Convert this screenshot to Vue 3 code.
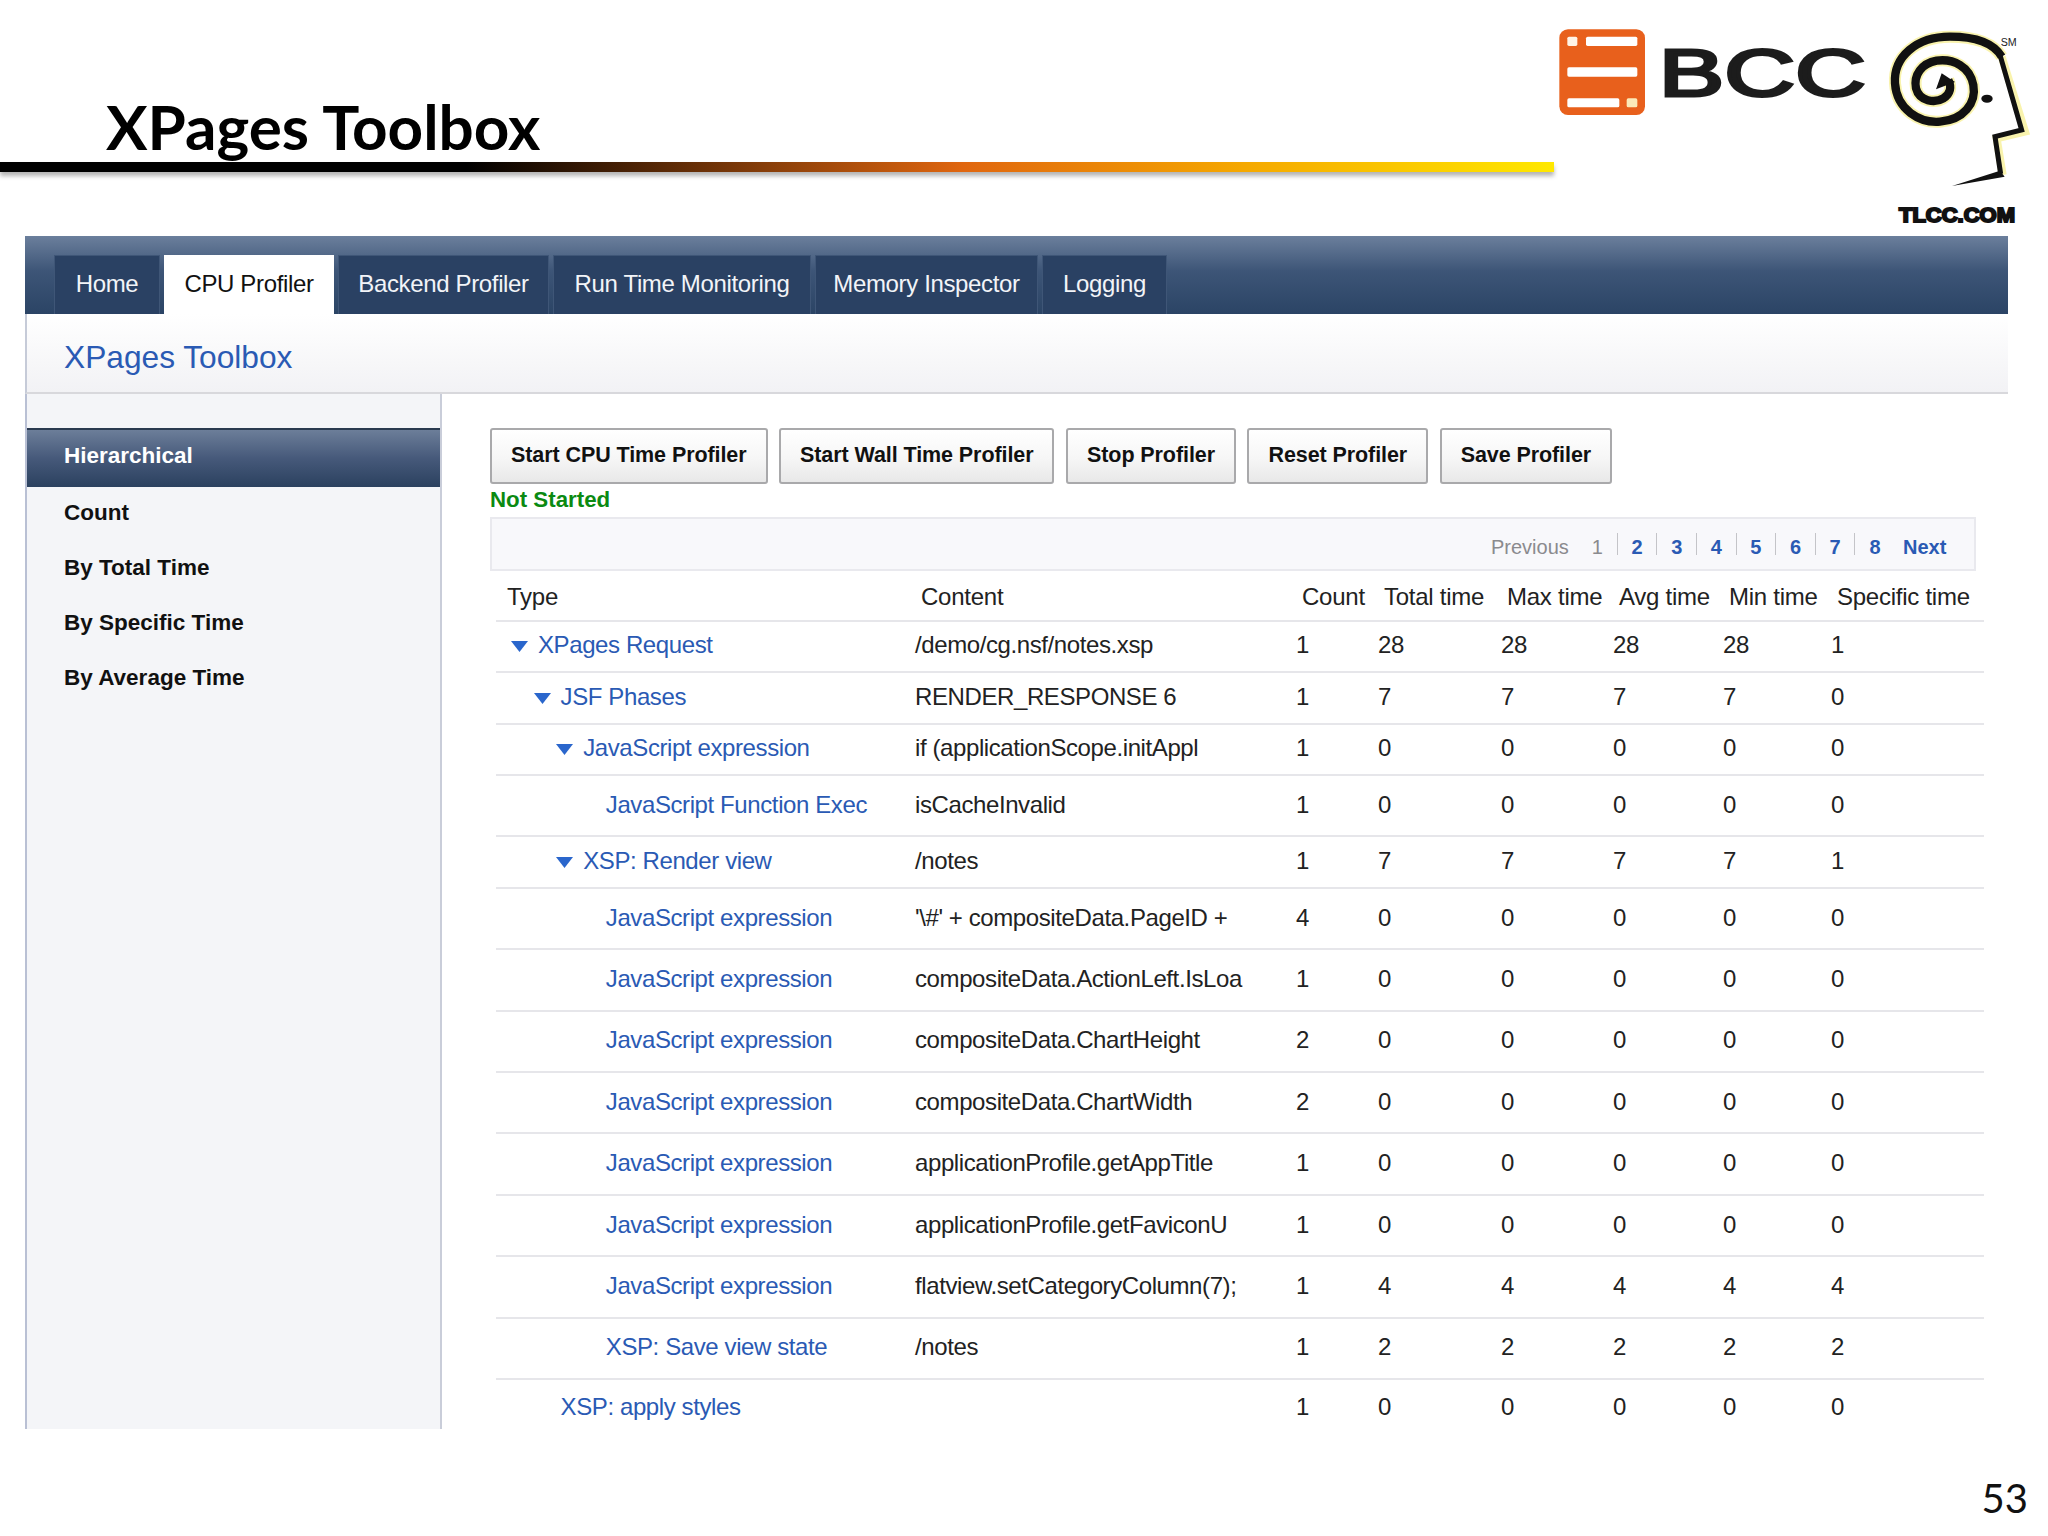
<template>
  <div class="slide">
    <header class="top">
      <div class="head-left">
        <h1 class="title">XPages Toolbox</h1>
        <div class="rule"></div>
      </div>
      <svg class="bcc" viewBox="0 0 990 330">
        <rect x="28" y="28" width="257" height="257" rx="26" fill="#e8601c" />
        <rect x="52" y="50" width="30" height="28" rx="5" fill="#fff3e6" />
        <rect x="108" y="50" width="154" height="28" rx="5" fill="#fff" />
        <rect x="52" y="142" width="210" height="28" rx="5" fill="#fff" />
        <rect x="52" y="235" width="156" height="27" rx="5" fill="#fff" />
        <rect x="230" y="235" width="32" height="27" rx="5" fill="#fbe9b8" />
        <text class="bcc-text" x="326" y="227" textLength="622" lengthAdjust="spacingAndGlyphs">BCC</text>
      </svg>
      <svg class="tlcc" viewBox="0 0 504 645">
        <path class="glow" d="M365 110 C335 60 270 50 210 50 C110 50 40 110 45 190 C50 270 120 310 180 305 C250 300 290 250 280 195 C270 140 220 115 170 122 C125 130 100 165 108 205 C118 245 165 250 190 235 C212 222 215 200 205 180" />
        <path class="glow thin" d="M365 110 L435 335 L350 355 L368 465" />
        <path class="line" d="M365 110 C335 60 270 50 210 50 C110 50 40 110 45 190 C50 270 120 310 180 305 C250 300 290 250 280 195 C270 140 220 115 170 122 C125 130 100 165 108 205 C118 245 165 250 190 235 C212 222 215 200 205 180" />
        <path class="face" d="M358 98 L425 330 L345 350 L362 462" />
        <polygon points="216,498 360,452 374,470" fill="#111" />
        <polygon points="185,160 225,186 168,208" fill="#111" />
        <ellipse cx="321" cy="236" rx="17" ry="12" fill="#111" />
        <text class="sm" x="362" y="78" textLength="48" lengthAdjust="spacingAndGlyphs">SM</text>
        <text class="tlcc-text" x="57" y="605" textLength="348" lengthAdjust="spacingAndGlyphs">TLCC.COM</text>
      </svg>
    </header>

    <div class="panel">
      <nav class="tabs">
        <a v-for="t in tabs" :key="t" class="tab" :class="{ active: t === 'CPU Profiler' }">{{ t }}</a>
      </nav>
      <div class="band">XPages Toolbox</div>
      <div class="body">
        <aside class="side">
          <a v-for="s in sideItems" :key="s" class="side-item" :class="{ active: s === 'Hierarchical' }">{{ s }}</a>
        </aside>
        <main class="main">
          <div class="buttons">
            <button v-for="b in buttons" :key="b" type="button">{{ b }}</button>
          </div>
          <div class="status">Not Started</div>
          <div class="pager">
            <span class="prev">Previous</span>
            <span class="pnum cur">1</span>
            <a v-for="n in pages" :key="n" class="pnum" :class="{ end: n === 8 }">{{ n }}</a>
            <a class="next">Next</a>
          </div>
          <div class="row head">
            <div class="type-head">Type</div>
            <div v-for="c in columns" :key="c">{{ c }}</div>
          </div>
          <div v-for="(r, i) in rows" :key="i" class="row" :class="{ tall: r.tall, last: i === rows.length - 1 }">
            <div class="type" :style="{ paddingLeft: 42 + r.level * 22.6 + 'px' }">
              <svg v-if="r.open" class="arrow" viewBox="0 0 17 11"><polygon points="0,0 17,0 8.5,11" /></svg>
              {{ r.type }}
            </div>
            <div>{{ r.content }}</div>
            <div v-for="(v, j) in r.nums" :key="j">{{ v }}</div>
          </div>
        </main>
      </div>
    </div>

    <div class="page-no">53</div>
  </div>
</template>

<script setup>
const tabs = ["Home", "CPU Profiler", "Backend Profiler", "Run Time Monitoring", "Memory Inspector", "Logging"];
const sideItems = ["Hierarchical", "Count", "By Total Time", "By Specific Time", "By Average Time"];
const buttons = ["Start CPU Time Profiler", "Start Wall Time Profiler", "Stop Profiler", "Reset Profiler", "Save Profiler"];
const pages = [2, 3, 4, 5, 6, 7, 8];
const columns = ["Content", "Count", "Total time", "Max time", "Avg time", "Min time", "Specific time"];

const rows = [
  { level: 0, open: true, type: "XPages Request", content: "/demo/cg.nsf/notes.xsp", nums: [1, 28, 28, 28, 28, 1] },
  { level: 1, open: true, type: "JSF Phases", content: "RENDER_RESPONSE 6", nums: [1, 7, 7, 7, 7, 0] },
  { level: 2, open: true, type: "JavaScript expression", content: "if (applicationScope.initAppl", nums: [1, 0, 0, 0, 0, 0] },
  { level: 3, tall: true, type: "JavaScript Function Exec", content: "isCacheInvalid", nums: [1, 0, 0, 0, 0, 0] },
  { level: 2, open: true, type: "XSP: Render view", content: "/notes", nums: [1, 7, 7, 7, 7, 1] },
  { level: 3, tall: true, type: "JavaScript expression", content: "'\\#' + compositeData.PageID +", nums: [4, 0, 0, 0, 0, 0] },
  { level: 3, tall: true, type: "JavaScript expression", content: "compositeData.ActionLeft.IsLoa", nums: [1, 0, 0, 0, 0, 0] },
  { level: 3, tall: true, type: "JavaScript expression", content: "compositeData.ChartHeight", nums: [2, 0, 0, 0, 0, 0] },
  { level: 3, tall: true, type: "JavaScript expression", content: "compositeData.ChartWidth", nums: [2, 0, 0, 0, 0, 0] },
  { level: 3, tall: true, type: "JavaScript expression", content: "applicationProfile.getAppTitle", nums: [1, 0, 0, 0, 0, 0] },
  { level: 3, tall: true, type: "JavaScript expression", content: "applicationProfile.getFaviconU", nums: [1, 0, 0, 0, 0, 0] },
  { level: 3, tall: true, type: "JavaScript expression", content: "flatview.setCategoryColumn(7);", nums: [1, 4, 4, 4, 4, 4] },
  { level: 3, tall: true, type: "XSP: Save view state", content: "/notes", nums: [1, 2, 2, 2, 2, 2] },
  { level: 1, type: "XSP: apply styles", content: "", nums: [1, 0, 0, 0, 0, 0] },
];
</script>

<style>
html,
body {
  background: #fff;
}
</style>

<style scoped>
.slide {
  width: 2048px;
  height: 1536px;
  overflow: hidden;
  font-family: "Liberation Sans", Arial, sans-serif;
  color: #222;
}

.top {
  display: flex;
  align-items: flex-start;
  height: 236px;
}

.head-left {
  width: 1550px;
  flex: none;
}

.title {
  margin: 0;
  padding: 91px 0 0 106px;
  height: 71px;
  font-family: Lato, "Liberation Sans", sans-serif;
  font-weight: 700;
  font-size: 62px;
  line-height: 70px;
  color: #000;
  white-space: nowrap;
}

.rule {
  width: 1554px;
  height: 10px;
  background: linear-gradient(90deg, #000 0%, #000 30%, #e0660f 62%, #f5a800 80%, #ffe800 100%);
  box-shadow: 0 4px 4px rgba(90, 90, 90, .45);
}

.bcc {
  width: 330px;
  height: 110px;
  margin-top: 20px;
  flex: none;
}

.bcc-text {
  font-family: "Liberation Sans", sans-serif;
  font-size: 202px;
  fill: #1c1c1c;
  stroke: #1c1c1c;
  stroke-width: 9px;
}

.tlcc {
  width: 168px;
  height: 215px;
  margin-top: 20px;
  flex: none;
}

.glow,
.line,
.face {
  fill: none;
  stroke-linejoin: miter;
}

.glow {
  stroke: #f7ee8a;
  stroke-width: 36px;
  opacity: .7;
}

.glow.thin {
  stroke-width: 24px;
}

.line {
  stroke: #111;
  stroke-width: 25px;
}

.face {
  stroke: #111;
  stroke-width: 15px;
}

.sm {
  font-family: "Liberation Sans", sans-serif;
  font-size: 30px;
  fill: #222;
}

.tlcc-text {
  font-family: "Liberation Sans", sans-serif;
  font-weight: 700;
  font-size: 62px;
  fill: #111;
  stroke: #111;
  stroke-width: 6px;
}

.panel {
  width: 1983px;
  margin-left: 25px;
  height: 1193px;
  display: flex;
  flex-direction: column;
}

.tabs {
  height: 78px;
  padding: 19px 0 0 29px;
  box-sizing: border-box;
  display: grid;
  grid-template-columns: 106px 170px 211px 258px 223px 125px;
  justify-content: start;
  gap: 4px;
  background: linear-gradient(180deg, #6b7f9c 0%, #3d5577 45%, #2b4465 100%);
}

.tab {
  height: 59px;
  line-height: 56px;
  text-align: center;
  font-size: 24px;
  letter-spacing: -.35px;
  color: #f2f4f8;
  background: #2a4163;
  border: 1px solid #3f5677;
  border-bottom: 0;
  box-sizing: border-box;
}

.tab.active {
  background: #fff;
  color: #111;
  border-color: #fff;
}

.band {
  height: 80px;
  padding-left: 37px;
  box-sizing: border-box;
  line-height: 86px;
  font-size: 31.7px;
  color: #2a5ab4;
  background: linear-gradient(180deg, #fff 0%, #f2f2f5 100%);
  border-bottom: 2px solid #d8d8dc;
  border-left: 2px solid #c6cbd8;
}

.body {
  flex: 1;
  display: flex;
  min-height: 0;
}

.side {
  width: 417px;
  flex: none;
  box-sizing: border-box;
  padding-top: 34px;
  background: #f4f5f8;
  border-left: 2px solid #b9c0d4;
  border-right: 2px solid #c9cdd9;
}

.side-item {
  display: block;
  height: 55px;
  line-height: 55px;
  padding-left: 37px;
  font-size: 22.5px;
  font-weight: 700;
  color: #111;
}

.side-item.active {
  height: 59px;
  line-height: 52px;
  color: #fff;
  background: linear-gradient(180deg, #6c7e99 0%, #46597a 50%, #2b415f 100%);
  border-top: 2px solid #2a3a50;
  box-sizing: border-box;
  margin-bottom: -2px;
}

.main {
  flex: 1;
  padding: 34px 0 0 48px;
  min-width: 0;
}

.buttons {
  display: flex;
  gap: 11.5px;
}

button {
  height: 56px;
  padding: 0 19px 1px;
  font: 700 21.5px "Liberation Sans", Arial, sans-serif;
  letter-spacing: -.08px;
  color: #111;
  background: linear-gradient(180deg, #fff 0%, #f6f6f6 55%, #e8e8e8 100%);
  border: 2px solid #a9a9ab;
  border-radius: 3px;
}

.status {
  height: 33px;
  line-height: 32px;
  font-size: 22.3px;
  font-weight: 700;
  color: #0b8a12;
}

.pager {
  width: 1486px;
  height: 54px;
  box-sizing: border-box;
  display: flex;
  align-items: center;
  padding-left: 999px;
  font-size: 20px;
  background: #f8f8fb;
  border: 2px solid #e9e9ee;
}

.prev {
  color: #8a8a8e;
  margin-right: 23px;
  padding-top: 6px;
}

.pnum {
  width: 39.6px;
  height: 22px;
  line-height: 28px;
  text-align: center;
  font-weight: 700;
  color: #2a5ab4;
  border-right: 1px solid #c4c4c8;
  box-sizing: border-box;
}

.pnum.cur {
  color: #8a8a8e;
  font-weight: 400;
  width: 26px;
  text-align: left;
}

.pnum.end {
  border-right: 0;
}

.next {
  margin-left: 8px;
  padding-top: 6px;
  font-weight: 700;
  color: #2a5ab4;
}

.row {
  width: 1488px;
  margin-left: 6px;
  height: 51.5px;
  padding-bottom: 2px;
  box-sizing: border-box;
  display: grid;
  grid-template-columns: 419px 381px 82px 123px 112px 110px 108px 153px;
  align-items: center;
  font-size: 24px;
  letter-spacing: -.4px;
  color: #222;
  white-space: nowrap;
  border-bottom: 2px solid #e6e6ea;
}

.row.tall {
  height: 61.4px;
}

.row.last {
  border-bottom: 0;
  height: 56px;
}

.row.head {
  height: 50.5px;
  padding: 4px 0 0;
  letter-spacing: -.25px;
}

.row.head > div {
  padding-left: 6px;
}

.row.head > .type-head {
  padding-left: 11px;
}

.type {
  position: relative;
  color: #2a5ab4;
}

.arrow {
  position: absolute;
  width: 17px;
  height: 11px;
  margin-left: -27px;
  top: 50%;
  margin-top: -4px;
  fill: #2a66cc;
}

.page-no {
  margin-top: 45px;
  padding-right: 20px;
  text-align: right;
  font-family: Lato, "Liberation Sans", sans-serif;
  font-size: 40px;
  line-height: 48px;
  color: #111;
}
</style>
